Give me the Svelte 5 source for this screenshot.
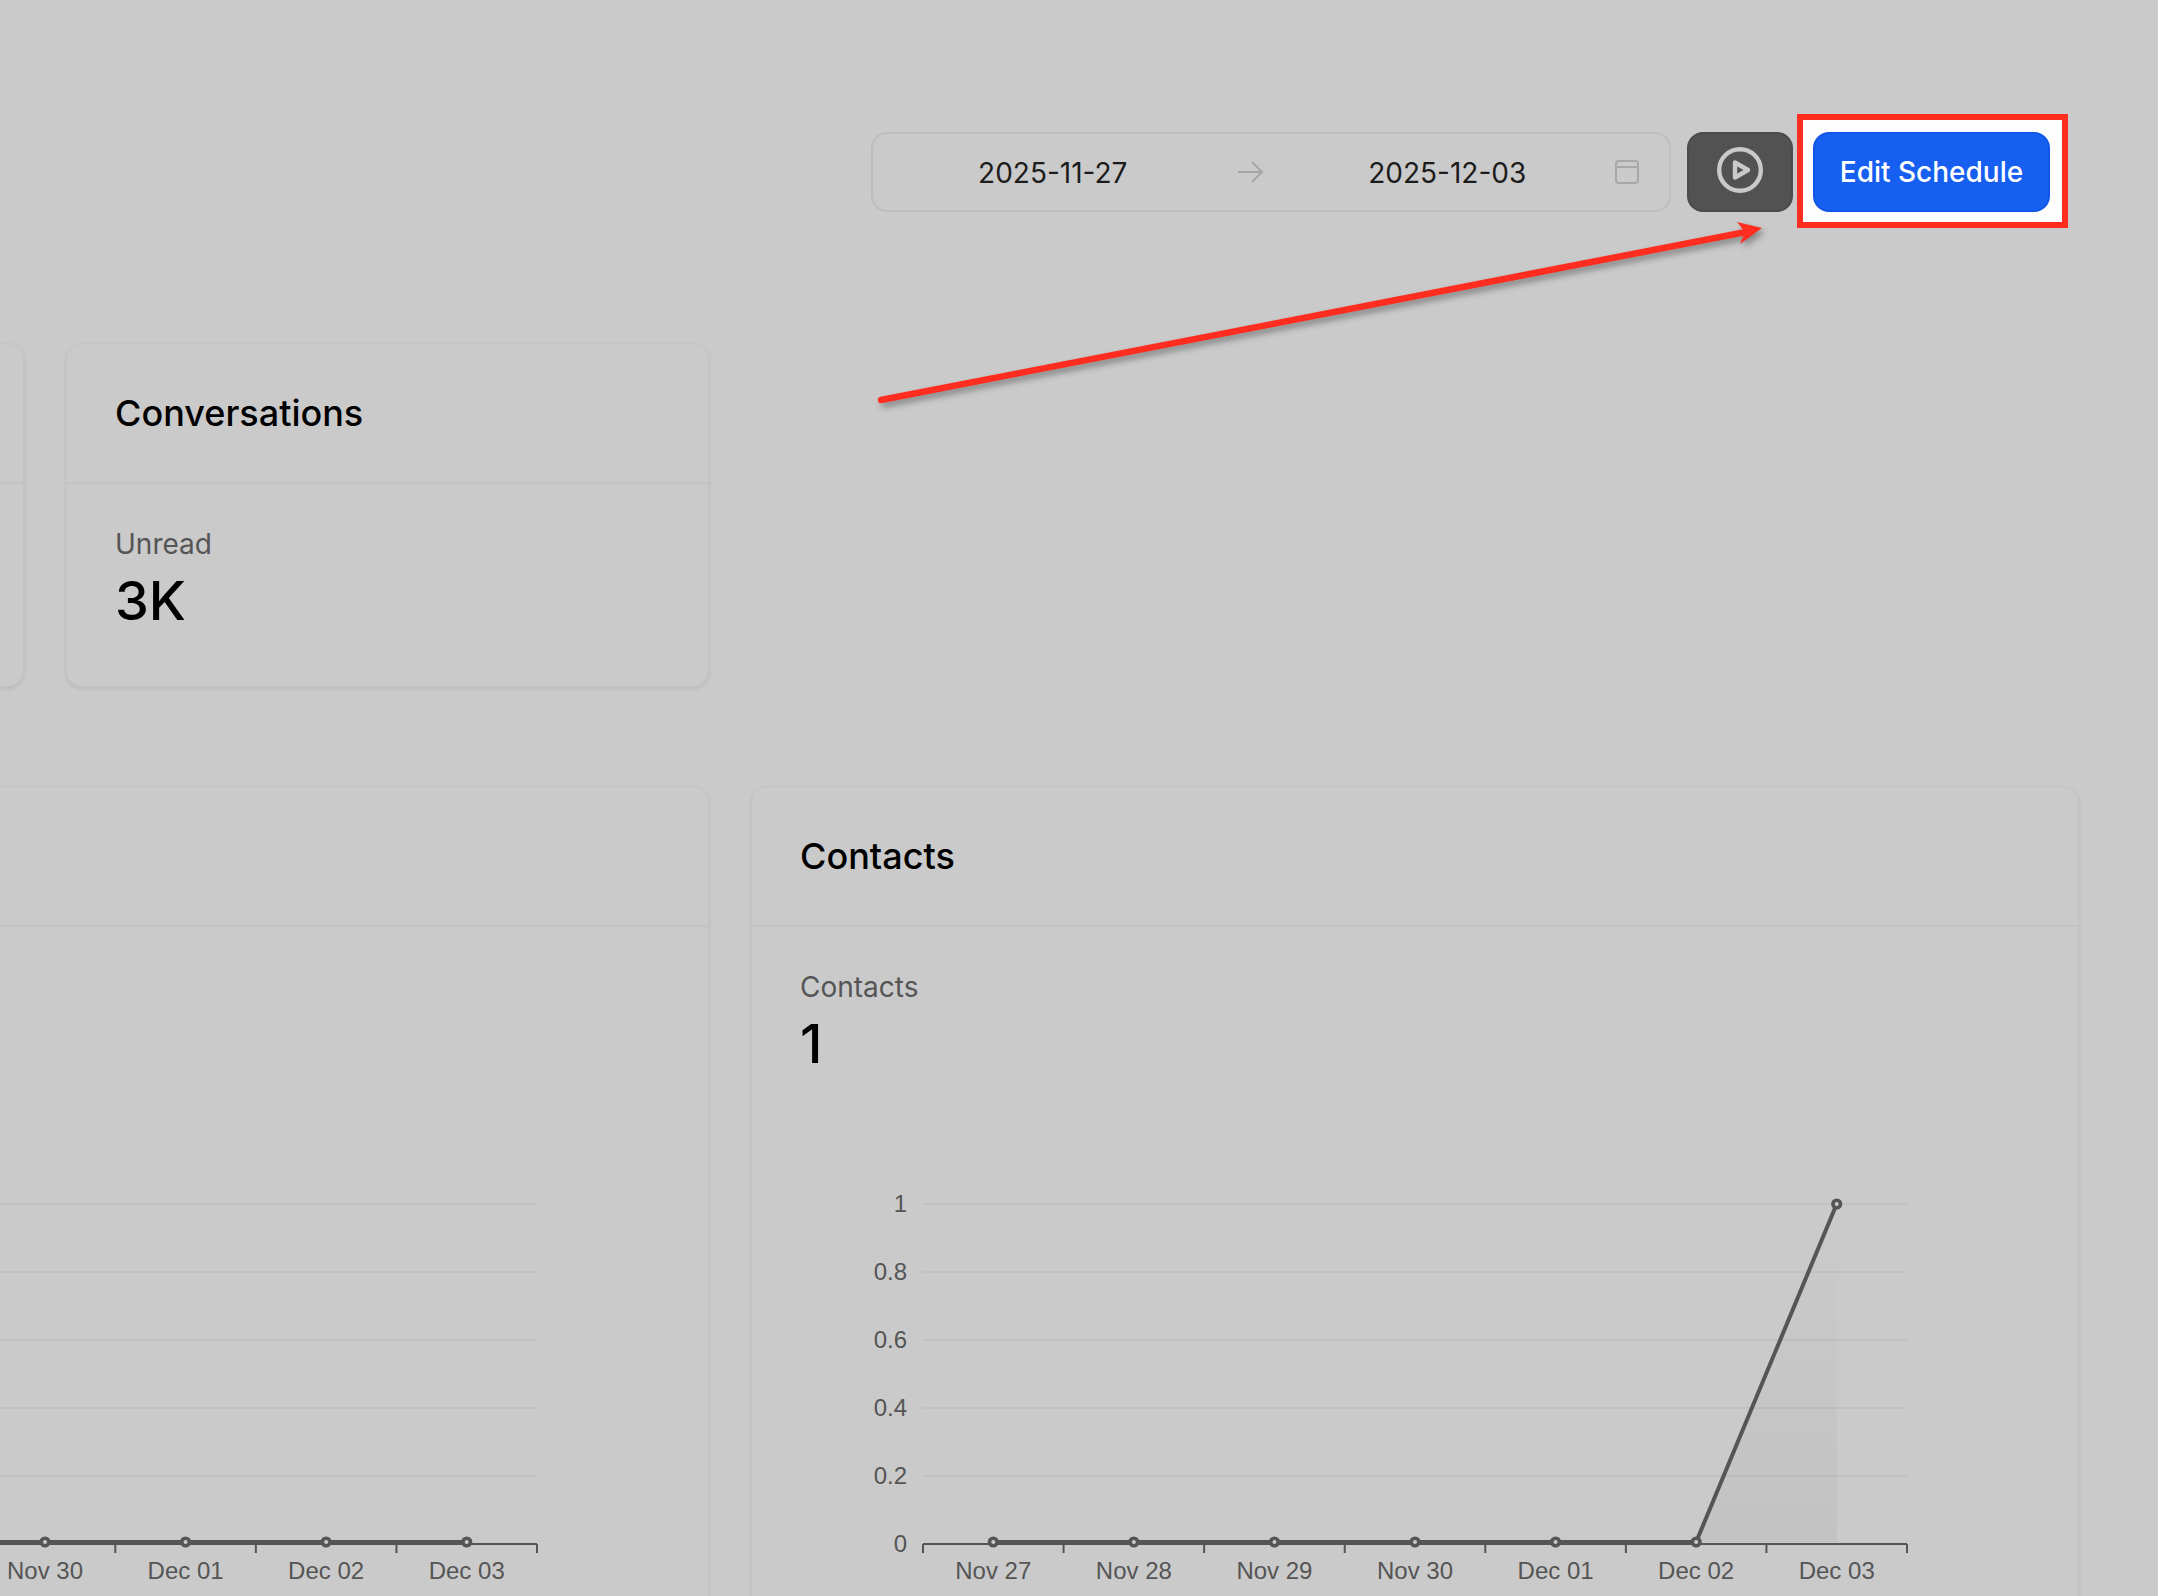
<script lang="ts">
  // Chart geometry is shared by both cards, the left one just runs off the page
  const axisLeft = 123;
  const axisRight = 1107;
  const plotTop = 16;
  const plotBottom = 356;
  const step = (axisRight - axisLeft) / 7;

  const days = ['Nov 27', 'Nov 28', 'Nov 29', 'Nov 30', 'Dec 01', 'Dec 02', 'Dec 03'];
  const yTicks = [1, 0.8, 0.6, 0.4, 0.2, 0];

  const xFor = (i: number) => axisLeft + step * (i + 0.5);
  const yFor = (v: number) => plotBottom - 2 - v * (plotBottom - 2 - plotTop);
  const gridY = (v: number) => plotBottom - v * (plotBottom - plotTop);

  function linePoints(values: number[]) {
    return values.map((v, i) => `${xFor(i)},${yFor(v)}`).join(' ');
  }

  const flat = [0, 0, 0, 0, 0, 0, 0];
  const contacts = [0, 0, 0, 0, 0, 0, 1];
</script>

{#snippet chart(values: number[], id: string, firstLabel: number, showYLabels: boolean)}
  <svg class="chart" width="1230" height="409" viewBox="0 0 1230 409">
    <defs>
      <linearGradient id={id} x1="0" y1="0" x2="0" y2="1">
        <stop offset="0.05" stop-color="#555" stop-opacity="0" />
        <stop offset="1" stop-color="#555" stop-opacity="0.065" />
      </linearGradient>
    </defs>

    {#each yTicks as tick}
      {#if tick !== 0}
        <line x1={axisLeft} x2={axisRight} y1={gridY(tick)} y2={gridY(tick)} stroke="#c1c1c1" stroke-width="2" />
      {/if}
      {#if showYLabels}
        <text class="tick" x="107" y={gridY(tick) + 8} text-anchor="end">{tick}</text>
      {/if}
    {/each}

    {#if values.some((v) => v > 0)}
      <polygon
        points="{xFor(5)},{yFor(0)} {xFor(6)},{yFor(1)} {xFor(6)},{yFor(0)}"
        fill="url(#{id})"
      />
    {/if}

    <line x1={axisLeft} x2={axisRight} y1={plotBottom} y2={plotBottom} stroke="#555" stroke-width="2" />
    {#each Array(8) as _, i}
      <line x1={axisLeft + step * i} x2={axisLeft + step * i} y1={plotBottom} y2={plotBottom + 9} stroke="#555" stroke-width="2" />
    {/each}

    <polyline points={linePoints(values)} fill="none" stroke="#555" stroke-width="4" />
    {#each values as v, i}
      <circle cx={xFor(i)} cy={yFor(v)} r="3.8" fill="#cacaca" stroke="#555" stroke-width="3.6" />
      {#if i >= firstLabel}
        <text class="tick" x={xFor(i)} y={plotBottom + 35} text-anchor="middle">{days[i]}</text>
      {/if}
    {/each}
  </svg>
{/snippet}

<div class="viewport">
  <div class="page">
    <header class="toolbar">
      <div class="range">
        <span class="range__date">2025-11-27</span>
        <svg class="range__arrow" width="27" height="24" viewBox="0 0 27 24" fill="none" stroke="#a6a6a6" stroke-width="2">
          <path d="M1 12h24M15 2l10 10-10 10" />
        </svg>
        <span class="range__date">2025-12-03</span>
        <svg class="range__icon" width="24" height="24" viewBox="0 0 24 24" fill="none" stroke="#a8a8a8" stroke-width="2">
          <rect x="1" y="1" width="22" height="22" rx="3" />
          <path d="M1 7h22" />
        </svg>
      </div>

      <button type="button" class="play" aria-label="Play">
        <svg width="46" height="46" viewBox="0 0 46 46" fill="none" stroke="#cacaca" stroke-width="4.4">
          <circle cx="23" cy="23" r="20.8" />
          <path d="M18 15.5 31 23l-13 7.5z" stroke-linejoin="round" />
        </svg>
      </button>

      <div class="edit">
        <span class="edit__frame"></span>
        <button type="button" class="edit__button">Edit Schedule</button>
      </div>
    </header>

    <section class="stats">
      <article class="card">
        <div class="card__head"></div>
      </article>
      <article class="card">
        <div class="card__head"><h2>Conversations</h2></div>
        <div class="card__body">
          <div class="metric__label">Unread</div>
          <div class="metric__value">3K</div>
        </div>
      </article>
    </section>

    <section class="charts">
      <article class="card card--tall">
        <div class="card__head"></div>
        <div class="card__body">
          <div class="metric__spacer"></div>
          {@render chart(flat, 'areaFlat', 3, false)}
        </div>
      </article>
      <article class="card card--tall">
        <div class="card__head"><h2>Contacts</h2></div>
        <div class="card__body">
          <div class="metric__label">Contacts</div>
          <div class="metric__value">1</div>
          {@render chart(contacts, 'areaContacts', 0, true)}
        </div>
      </article>
    </section>
  </div>

  <!-- annotation arrow pointing at the button -->
  <svg class="pointer" width="2158" height="1596" viewBox="0 0 2158 1596">
    <path d="M881 400 1746 232" stroke="#ff2d1f" stroke-width="6.5" stroke-linecap="round" fill="none" />
    <path d="M1762 228 1737 222 1745 232 1740 244z" fill="#ff2d1f" />
  </svg>
</div>

<style>
  :global(body) {
    background: #cacaca;
    font-family: Inter, "Liberation Sans", sans-serif;
  }

  .viewport {
    position: relative;
    width: 2158px;
    height: 1596px;
    overflow: hidden;
  }

  .page {
    width: 2698px;
    margin-left: -619px;
    padding-top: 132px;
  }

  .toolbar {
    display: flex;
    justify-content: flex-end;
    align-items: stretch;
    height: 80px;
    padding-right: 29px;
  }

  .range {
    display: flex;
    align-items: center;
    width: 800px;
    box-sizing: border-box;
    padding: 0 30px 0 22px;
    border: 2px solid #bebebe;
    border-radius: 16px;
    font-size: 28px;
    color: #1c1c1c;
  }

  .range__date {
    flex: 1;
    padding-top: 1px;
    text-align: center;
  }

  .range__arrow {
    margin: 0 26px;
  }

  .range__icon {
    margin-left: 10px;
  }

  .play {
    display: flex;
    align-items: center;
    justify-content: center;
    width: 106px;
    margin-left: 16px;
    padding: 0 0 4px;
    background: #525252;
    border: 2px solid #4c4c4c;
    border-radius: 16px;
  }

  .edit {
    position: relative;
    width: 237px;
    margin-left: 20px;
  }

  .edit__frame {
    position: absolute;
    top: -18px;
    right: -18px;
    bottom: -16px;
    left: -16px;
    background: #fdfdfd;
    border: 6px solid #ff2d1f;
  }

  .edit__button {
    position: relative;
    width: 100%;
    height: 100%;
    padding: 0;
    background: #175ff0;
    border: 2px solid #0f57e6;
    border-radius: 16px;
    font: 550 28px Inter, "Liberation Sans", sans-serif;
    color: #fff;
  }

  .stats {
    display: grid;
    grid-template-columns: repeat(4, 643px);
    gap: 42px;
    margin-top: 131px;
  }

  .charts {
    display: grid;
    grid-template-columns: repeat(2, 1328px);
    gap: 42px;
    margin-top: 99px;
  }

  .card {
    height: 344px;
    box-sizing: border-box;
    background: #cacaca;
    border: 1px solid #c4c4c4;
    border-radius: 16px;
    box-shadow: 0 2px 4px rgba(0, 0, 0, 0.08);
  }

  .card--tall {
    height: 900px;
  }

  .card__head {
    display: flex;
    align-items: center;
    height: 140px;
    box-sizing: border-box;
    padding: 0 48px;
    border-bottom: 2px solid #c3c3c3;
  }

  h2 {
    margin: 0;
    font-size: 36px;
    font-weight: 550;
    color: #000;
  }

  .card__body {
    padding: 40px 48px 0;
  }

  .metric__label {
    height: 40px;
    font-size: 28px;
    line-height: 40px;
    color: #555;
  }

  .metric__value {
    height: 64px;
    margin-top: 5px;
    font-size: 54px;
    font-weight: 500;
    line-height: 64px;
    color: #000;
  }

  .metric__spacer {
    height: 109px;
  }

  .chart {
    display: block;
    margin-top: 112px;
  }

  .tick {
    font: 24px "Liberation Sans", Arial, sans-serif;
    fill: #555;
  }

  .pointer {
    position: absolute;
    top: 0;
    left: 0;
    pointer-events: none;
    filter: drop-shadow(3px 4px 3px rgba(0, 0, 0, 0.35));
  }
</style>
